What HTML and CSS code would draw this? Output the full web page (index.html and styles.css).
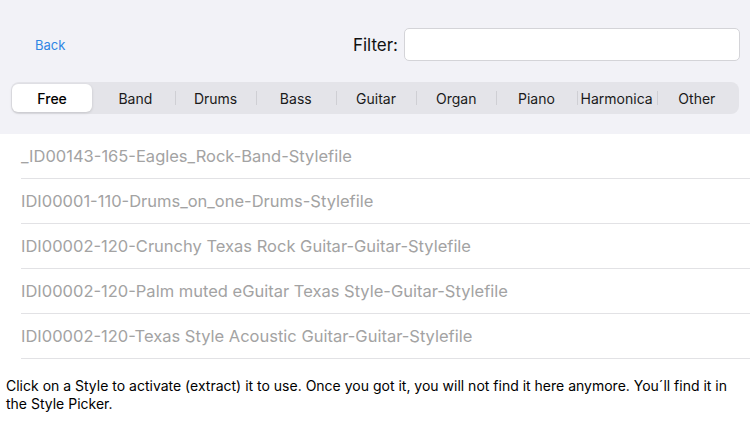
FILE: index.html
```html
<!DOCTYPE html>
<html lang="en">
<head>
    <meta charset="UTF-8">
    <meta name="viewport" content="width=device-width, initial-scale=1.0">
    <title>Free Styles</title>
    <link rel="stylesheet" href="styles.css">
</head>
<body>
    <div class="header">
        <div class="toolbar">
            <a class="back" href="#">Back</a>
            <div class="filter">
                <label for="filterInput">Filter:</label>
                <input type="text" id="filterInput">
            </div>
        </div>
        <div class="segments">
            <div class="segment selected">Free</div>
            <div class="segment">Band</div>
            <div class="segment">Drums</div>
            <div class="segment">Bass</div>
            <div class="segment">Guitar</div>
            <div class="segment">Organ</div>
            <div class="segment">Piano</div>
            <div class="segment">Harmonica</div>
            <div class="segment">Other</div>
        </div>
    </div>

    <ul class="style-list">
        <li>_ID00143-165-Eagles_Rock-Band-Stylefile</li>
        <li>IDI00001-110-Drums_on_one-Drums-Stylefile</li>
        <li>IDI00002-120-Crunchy Texas Rock Guitar-Guitar-Stylefile</li>
        <li>IDI00002-120-Palm muted eGuitar Texas Style-Guitar-Stylefile</li>
        <li>IDI00002-120-Texas Style Acoustic Guitar-Guitar-Stylefile</li>
    </ul>

    <p class="hint">Click on a Style to activate (extract) it to use. Once you got it, you will not find it here anymore. You´ll find it in the Style Picker.</p>
</body>
</html>
```

FILE: styles.css
```css
body {
    margin: 0;
    padding: 0;
    background-color: #fff;
    font-family: Inter, "Noto Sans", sans-serif;
    width: 750px;
    height: 422px;
    overflow: hidden;
}

.header {
    background-color: #f2f2f7;
    height: 134px;
    box-sizing: border-box;
    padding: 28px 11px 0 11px;
}

.toolbar {
    display: flex;
    align-items: center;
    justify-content: space-between;
    height: 33px;
}

.back {
    color: #2f86e4;
    text-decoration: none;
    font-size: 13px;
    margin-left: 24px;
}

.filter {
    display: flex;
    align-items: center;
    gap: 6px;
}

.filter label {
    font-size: 17px;
    color: #111;
}

.filter input {
    width: 336px;
    height: 33px;
    box-sizing: border-box;
    border: 1px solid #d4d4d8;
    border-radius: 5px;
    background: #fff;
    margin-right: -1px;
}

.segments {
    display: flex;
    margin-top: 21px;
    height: 32px;
    background-color: #e4e4e9;
    border-radius: 8px;
    padding: 2px 2px 2px 1px;
    box-sizing: border-box;
}

.segment {
    flex: 1;
    display: flex;
    align-items: center;
    justify-content: center;
    font-size: 14px;
    color: #1a1a1a;
    position: relative;
}

.segment + .segment::before {
    content: "";
    position: absolute;
    left: 0;
    top: 7px;
    bottom: 7px;
    width: 1px;
    background-color: #cfcfd4;
}

.segment.selected {
    background-color: #fff;
    border-radius: 6px;
    font-weight: 500;
    color: #000;
    margin-right: 3px;
    box-shadow: 0 1px 3px rgba(0, 0, 0, 0.15);
}

.segment.selected + .segment::before {
    display: none;
}

.style-list {
    list-style: none;
    margin: 0;
    padding: 0 0 0 21px;
}

.style-list li {
    height: 45px;
    line-height: 44px;
    font-size: 16.5px;
    color: #a3a3a3;
    border-bottom: 1px solid #e2e2e5;
    box-sizing: border-box;
    white-space: nowrap;
}

.hint {
    margin: 18px 0 0 6px;
    font-size: 14px;
    line-height: 18px;
    color: #000;
}
```
